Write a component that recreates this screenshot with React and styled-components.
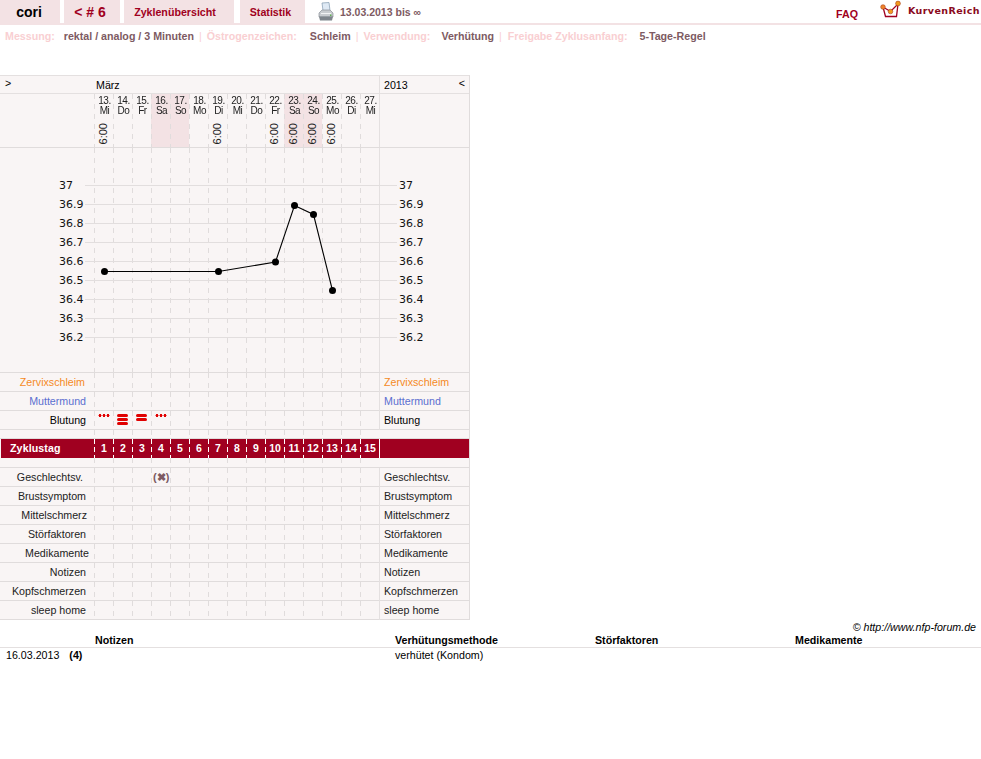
import React from "react";
import styled, { createGlobalStyle } from "styled-components";

const dayCount = 15;
const dates = [
  ["13.", "Mi", true], ["14.", "Do"], ["15.", "Fr"], ["16.", "Sa", false, true], ["17.", "So", false, true],
  ["18.", "Mo"], ["19.", "Di", true], ["20.", "Mi"], ["21.", "Do"], ["22.", "Fr", true],
  ["23.", "Sa", true, true], ["24.", "So", true, true], ["25.", "Mo", true], ["26.", "Di"], ["27.", "Mi"],
];
const temps = ["37", "36.9", "36.8", "36.7", "36.6", "36.5", "36.4", "36.3", "36.2"];
const points = [[104.5, 123.5], [218.5, 123.5], [275.5, 114], [294.5, 57.5], [313.5, 66.5], [332.5, 142.5]];
const days = Array.from({ length: dayCount }, (_, i) => i);

function Printer() {
  return (
    <svg width="16" height="20" viewBox="0 0 16 20">
      <path d="M4 1l7-0.5 1 8H5z" fill="#dfeaf5" stroke="#8ea3b8" strokeWidth="0.8" />
      <path d="M1 11l3-3h8l3 3v4H1z" fill="#c9ccd0" stroke="#8a9098" strokeWidth="0.7" />
      <path d="M1 14.5h14l-1 4H2z" fill="#7f858c" />
      <rect x="3" y="11" width="10" height="1" fill="#f2f3f4" />
      <rect x="12" y="12.5" width="1.5" height="1.5" fill="#5fb050" />
    </svg>
  );
}

function Logo() {
  return (
    <svg width="22" height="20" viewBox="0 0 22 20">
      <path d="M3 7l2.5 9.5h11L18 4" fill="none" stroke="#a00020" strokeWidth="1.3" />
      <path d="M3 7l7.500 4.500L18 4" fill="none" stroke="#a00020" strokeWidth="1.2" />
      <circle cx="3" cy="7" r="2.300" fill="#f0852a" stroke="#a8421c" strokeWidth="0.6" />
      <circle cx="10.500" cy="11.500" r="2.300" fill="#f29a1d" stroke="#a8421c" strokeWidth="0.6" />
      <circle cx="18" cy="3.500" r="2.400" fill="#f29a1d" stroke="#a8421c" strokeWidth="0.6" />
    </svg>
  );
}

function Chart() {
  const path = points.map((p) => p.join(",")).join(" ");
  return (
    <ChartSvg viewBox="0 0 469 224" width="469" height="224">
      {days.map((i) => (
        <line key={i} x1={94.5 + i * 19} x2={94.5 + i * 19} y1="0" y2="224" stroke="#e0dcdc" strokeDasharray="5 5" />
      ))}
      {temps.map((t, i) => {
        const y = 37.5 + i * 19;
        return (
          <g key={t}>
            <line x1="85" x2="397" y1={y} y2={y} stroke="#e2dede" />
            <ChartText x="59" y={y + 3.5}>{t}</ChartText>
            <ChartText x="399" y={y + 3.5}>{t}</ChartText>
          </g>
        );
      })}
      <polyline points={path} fill="none" stroke="#000" strokeWidth="1.1" />
      {points.map(([x, y]) => <circle key={x} cx={x} cy={y} r="3.5" fill="#000" />)}
    </ChartSvg>
  );
}

function Row({ label, color, pad, marks }) {
  return (
    <TableRow>
      <LeftLabel $color={color} $pad={pad}>{label}</LeftLabel>
      {days.map((i) => <DayCell key={i}>{marks && marks[i]}</DayCell>)}
      <RightLabel $color={color}>{label}</RightLabel>
    </TableRow>
  );
}

function Bars({ n }) {
  return <BarStack>{Array.from({ length: n }, (_, i) => <Bar key={i} />)}</BarStack>;
}

export default function App() {
  return (
    <>
      <Global />
      <TopBar>
        <Tab $w={60} $mr={4} $pr={2}><Name>cori</Name></Tab>
        <Tab $w={56} $mr={4} $pr={4}><Cycle>&lt; # 6</Cycle></Tab>
        <Tab $w={110} $mr={6} $pr={8}><TabLink>Zyklenübersicht</TabLink></Tab>
        <Tab $w={65} $mr={0} $pr={4}><TabLink>Statistik</TabLink></Tab>
        <PrinterSlot><Printer /></PrinterSlot>
        <Range>13.03.2013 bis ∞</Range>
        <Faq>FAQ</Faq>
        <LogoSlot><Logo /></LogoSlot>
        <Brand>KurvenReich</Brand>
      </TopBar>
      <InfoLine>
        <Key $gap={9}>Messung:</Key><Val>rektal / analog / 3 Minuten</Val><Sep $after={5}>|</Sep>
        <Key $gap={13}>Östrogenzeichen:</Key><Val>Schleim</Val><Sep $after={5}>|</Sep>
        <Key $gap={11}>Verwendung:</Key><Val>Verhütung</Val><Sep $after={6}>|</Sep>
        <Key $gap={12}>Freigabe Zyklusanfang:</Key><Val>5-Tage-Regel</Val>
      </InfoLine>

      <Table>
        <MonthRow>
          <Arrow>&gt;</Arrow>
          <Month>März</Month>
          <Year>2013<span>&lt;</span></Year>
        </MonthRow>
        <DateRow>
          <div />
          {dates.map(([d, w, time, weekend]) => (
            <DateCell key={d} $weekend={weekend}>
              <DateText>{d}<br />{w}</DateText>
              {time && <TimeText>6:00</TimeText>}
            </DateCell>
          ))}
          <DateEnd />
        </DateRow>
        <ChartRow><Chart /></ChartRow>
        <Row label="Zervixschleim" color="#f58a1f" pad={9} />
        <Row label="Muttermund" color="#5b6fd0" pad={8} />
        <Row label="Blutung" color="#000" pad={8} marks={[<Dots key="a" />, <Bars key="b" n={3} />, <Bars key="c" n={2} />, <Dots key="d" />]} />
        <Spacer $h={8}>{days.map((i) => <SpacerCell key={i} />)}</Spacer>
        <RedRow>
          <RedLabel>Zyklustag</RedLabel>
          {days.map((i) => <RedCell key={i}>{i + 1}</RedCell>)}
          <RedEnd />
        </RedRow>
        <Spacer $h={9}>{days.map((i) => <SpacerCell key={i} />)}</Spacer>
        <Row label="Geschlechtsv." color="#222" pad={11} marks={[null, null, null, <Mark key="x">(✖)</Mark>]} />
        <Row label="Brustsymptom" color="#222" pad={8} />
        <Row label="Mittelschmerz" color="#222" pad={7} />
        <Row label="Störfaktoren" color="#222" pad={8} />
        <Row label="Medikamente" color="#222" pad={5} />
        <Row label="Notizen" color="#222" pad={8} />
        <Row label="Kopfschmerzen" color="#222" pad={8} />
        <Row label="sleep home" color="#222" pad={8} />
      </Table>

      <Credit>© http://www.nfp-forum.de</Credit>
      <NotesHead>
        <span /><span>Notizen</span><span>Verhütungsmethode</span><span>Störfaktoren</span><span>Medikamente</span>
      </NotesHead>
      <NotesRow>
        <span>16.03.2013<b>(4)</b></span><span /><span>verhütet (Kondom)</span><span /><span />
      </NotesRow>
    </>
  );
}

const Global = createGlobalStyle`
  html, body { margin: 0; padding: 0; background: #fff; }
  body { font-family: "Liberation Sans", Arial, sans-serif; font-size: 10.67px; color: #000; width: 981px; }
`;

const TopBar = styled.div`
  display: flex;
  height: 23px;
  border-bottom: 2px solid #f3e2e4;
  align-items: stretch;
`;

const Tab = styled.div`
  width: ${(p) => p.$w}px;
  margin-right: ${(p) => p.$mr}px;
  padding-right: ${(p) => p.$pr}px;
  box-sizing: border-box;
  background: #f3e2e4;
  display: flex;
  align-items: center;
  justify-content: center;
  padding-top: 1px;
`;

const Name = styled.span`
  font-size: 14px;
  font-weight: bold;
`;

const Cycle = styled.span`
  font-size: 14px;
  font-weight: bold;
  color: #a00020;
`;

const TabLink = styled.span`
  font-size: 10.67px;
  font-weight: bold;
  color: #a00020;
`;

const PrinterSlot = styled.div`
  margin-left: 13px;
  width: 22px;
  display: flex;
  align-items: center;
`;

const Range = styled.span`
  font-size: 10.5px;
  font-weight: bold;
  color: #7d5a62;
  line-height: 24px;
`;

const Faq = styled.span`
  margin-left: auto;
  font-size: 10.67px;
  font-weight: bold;
  color: #a00020;
  line-height: 28px;
`;

const LogoSlot = styled.div`
  margin-left: 22px;
  width: 28px;
`;

const Brand = styled.span`
  font-family: "DejaVu Sans", sans-serif;
  font-size: 9.5px;
  font-weight: bold;
  letter-spacing: 0.4px;
  color: #8a0a20;
  line-height: 21px;
  width: 73px;
  white-space: nowrap;
`;

const InfoLine = styled.div`
  display: flex;
  height: 50px;
  padding: 5px 0 0 5px;
  box-sizing: border-box;
  font-size: 10.67px;
  font-weight: bold;
  line-height: 13px;
`;

const Key = styled.span`
  color: #f9cfd2;
  margin-right: ${(p) => p.$gap}px;
`;

const Val = styled.span`
  color: #7d5a62;
`;

const Sep = styled.span`
  color: #f9cfd2;
  font-weight: normal;
  margin: 0 ${(p) => p.$after}px 0 5px;
`;

const cols = "94px repeat(15, 19px) 90px";

const dashes = (color) => `
  background-image: repeating-linear-gradient(${color} 0 5px, transparent 5px 10px);
  background-size: 1px 100%;
  background-repeat: no-repeat;
`;

const Table = styled.div`
  width: 469px;
  background: #f9f5f5;
  border-top: 1px solid #e4e0e0;
  border-right: 1px solid #e0dcdc;
`;

const MonthRow = styled.div`
  display: grid;
  grid-template-columns: 95px 284px 90px;
  height: 17px;
  border-bottom: 1px solid #e4e0e0;
  line-height: 18px;
`;

const Arrow = styled.span`
  padding-left: 5px;
  line-height: 14px;
`;

const Month = styled.span`
  padding-left: 1px;
`;

const Year = styled.span`
  display: flex;
  justify-content: space-between;
  padding: 0 4px;
  border-left: 1px solid #e4e0e0;
  span { line-height: 14px; }
`;

const DateRow = styled.div`
  display: grid;
  grid-template-columns: ${cols};
  height: 53px;
  border-bottom: 1px solid #e0dcdc;
`;

const DateCell = styled.div`
  position: relative;
  background-color: ${(p) => (p.$weekend ? "#f3e2e4" : "transparent")};
  ${dashes("#e0dcdc")}
  text-align: center;
  overflow: hidden;
`;

const DateText = styled.div`
  font-size: 10px;
  letter-spacing: -0.5px;
  line-height: 10px;
  padding: 2px 0 0 2px;
  color: #222;
  will-change: transform;
`;

const TimeText = styled.div`
  position: absolute;
  left: 4px;
  top: 29px;
  writing-mode: vertical-rl;
  transform: rotate(180deg);
  font-size: 11px;
  line-height: 11px;
  color: #222;
`;

const DateEnd = styled.div`
  border-left: 1px solid #e4e0e0;
`;

const ChartRow = styled.div`
  height: 224px;
  border-bottom: 1px solid #e0dcdc;
  background: linear-gradient(#e4e0e0, #e4e0e0) 379px 0 / 1px 100% no-repeat;
`;

const ChartSvg = styled.svg`
  display: block;
`;

const ChartText = styled.text`
  font-family: "DejaVu Sans", sans-serif;
  font-size: 11px;
  fill: #111;
`;

const TableRow = styled.div`
  display: grid;
  grid-template-columns: ${cols};
  height: 18px;
  border-bottom: 1px solid #e0dcdc;
  line-height: 19px;
`;

const LeftLabel = styled.div`
  text-align: right;
  padding-right: ${(p) => p.$pad}px;
  color: ${(p) => p.$color};
  white-space: nowrap;
`;

const RightLabel = styled.div`
  border-left: 1px solid #e4e0e0;
  padding-left: 4px;
  color: ${(p) => p.$color};
  white-space: nowrap;
`;

const DayCell = styled.div`
  ${dashes("#e0dcdc")}
  position: relative;
`;

const Dots = styled.span`
  position: absolute;
  left: 4px;
  top: 3px;
  width: 12px;
  height: 3px;
  background: radial-gradient(circle at center, #e00000 1.3px, transparent 1.7px) 0 0 / 4px 3px repeat-x;
`;

const BarStack = styled.span`
  position: absolute;
  left: 4px;
  top: 3px;
  display: flex;
  flex-direction: column;
  gap: 1px;
`;

const Bar = styled.span`
  width: 11px;
  height: 3px;
  border-radius: 2px;
  background: #e00000;
`;

const Mark = styled.span`
  position: absolute;
  left: 2px;
  top: 0;
  font-size: 11px;
  font-weight: bold;
  color: #7d5a62;
  white-space: nowrap;
`;

const Spacer = styled.div`
  display: grid;
  grid-template-columns: 94px repeat(15, 19px);
  height: ${(p) => p.$h}px;
  border-bottom: 1px solid #e0dcdc;
  &::before { content: ""; }
`;

const SpacerCell = styled.div`
  ${dashes("#e0dcdc")}
`;

const RedRow = styled.div`
  display: grid;
  grid-template-columns: 93px repeat(15, 19px) 90px;
  margin-left: 1px;
  height: 19px;
  background: #a00020;
  color: #fff;
  font-weight: bold;
  line-height: 19px;
`;

const RedLabel = styled.div`
  padding-left: 9px;
  letter-spacing: 0.1px;
`;

const RedCell = styled.div`
  ${dashes("#fff")}
  background-image: repeating-linear-gradient(#fff 0 5px, transparent 5px 8px);
  text-align: center;
  font-size: 10.5px;
  padding-left: 1px;
`;

const RedEnd = styled.div`
  border-left: 1px solid #fff;
`;

const Credit = styled.div`
  text-align: right;
  padding-right: 5px;
  font-style: italic;
  line-height: 13px;
  margin-top: 1px;
`;

const NotesHead = styled.div`
  display: grid;
  grid-template-columns: 95px 300px 200px 200px 186px;
  font-weight: bold;
  line-height: 13px;
  height: 13px;
  border-bottom: 1px solid #e4e0e0;
`;

const NotesRow = styled.div`
  display: grid;
  grid-template-columns: 95px 300px 200px 200px 186px;
  line-height: 15px;
  span:first-child { padding-left: 6px; white-space: nowrap; }
  b { margin-left: 10px; }
`;
